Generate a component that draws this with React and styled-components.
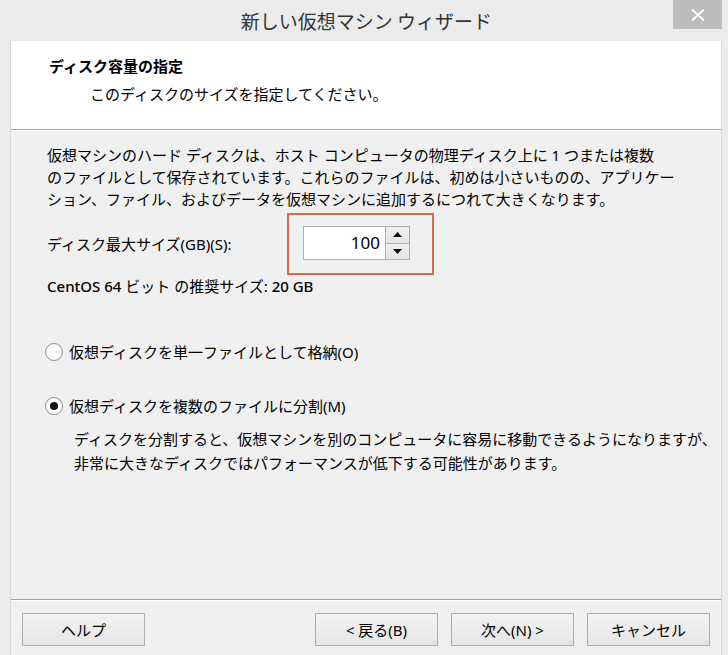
import React, { useState } from 'react';
import styled, { createGlobalStyle } from 'styled-components';

const Global = createGlobalStyle`
  html, body { margin: 0; padding: 0; background: #ebebeb; }
  body { font-family: "Noto Sans", "Noto Sans CJK JP", sans-serif; }
`;

const Window = styled.div`
  width: 728px;
  height: 655px;
  background: #ebebeb;
  display: flex;
  flex-direction: column;
  overflow: hidden;
`;

const TitleBar = styled.div`
  height: 41px;
  flex: none;
  display: grid;
  grid-template-columns: 1fr auto 1fr;
`;

const Title = styled.div`
  grid-column: 2;
  font-family: "Noto Sans CJK JP", sans-serif;
  font-size: 19px;
  line-height: 41px;
  color: #333;
  padding-left: 5px;
`;

const CloseButton = styled.div`
  grid-column: 3;
  justify-self: end;
  align-self: start;
  width: 49px;
  height: 29px;
  margin-right: 6px;
  background: #bcbcbc;
  color: #fff;
  display: flex;
  align-items: center;
  justify-content: center;
`;

const Client = styled.div`
  flex: 1;
  margin: 0 6px 0 10px;
  border-left: 1px solid #d8d8d8;
  border-right: 1px solid #d8d8d8;
  background: #f0f0f0;
  display: flex;
  flex-direction: column;
`;

const Header = styled.div`
  height: 89px;
  flex: none;
  background: #fff;
  border-bottom: 1px solid #a0a0a0;
  box-shadow: 0 1px 0 #fff;
  padding: 12px 0 0 38px;
  box-sizing: border-box;
`;

const HeaderTitle = styled.div`
  font-family: "Noto Sans CJK JP", sans-serif;
  font-weight: bold;
  font-size: 15px;
  line-height: 26px;
  color: #000;
`;

const HeaderSub = styled.div`
  font-family: "Noto Sans CJK JP", sans-serif;
  font-size: 15px;
  line-height: 26px;
  color: #000;
  padding-left: 41px;
  margin-top: 2px;
`;

const Body = styled.div`
  flex: 1;
  padding: 14px 0 0 36px;
  font-size: 15px;
  color: #000;
`;

const Paragraph = styled.p`
  margin: 0;
  line-height: 22px;
  white-space: nowrap;
`;

const SizeRow = styled.div`
  display: flex;
  align-items: center;
  margin-top: 3px;
`;

const SizeLabel = styled.div`
  width: 240px;
  line-height: 22px;
`;

const Highlight = styled.div`
  width: 147px;
  height: 62px;
  box-sizing: border-box;
  border: 2px solid #da6a4b;
  padding: 11px 0 0 14px;
`;

const Spinner = styled.div`
  display: flex;
  width: 107px;
  height: 34px;
  box-sizing: border-box;
  border: 1px solid #abadb3;
  background: #fff;
`;

const SpinValue = styled.div`
  flex: 1;
  text-align: right;
  padding-right: 5px;
  font-family: "Noto Sans", sans-serif;
  font-size: 17px;
  line-height: 31px;
`;

const SpinButtons = styled.div`
  width: 24px;
  display: flex;
  flex-direction: column;
`;

const SpinButton = styled.div`
  flex: 1;
  border: 1px solid #acacac;
  margin: -1px -1px ${p => (p.$up ? '0' : '-1px')} 0;
  background: linear-gradient(#f0f0f0, #e5e5e5);
  display: flex;
  align-items: center;
  justify-content: center;
`;

const Recommend = styled.div`
  line-height: 22px;
  .latin { font-weight: 500; }
`;

const RadioRow = styled.label`
  display: flex;
  align-items: center;
  gap: 6px;
  margin-left: -2px;
  margin-top: ${p => p.$top}px;
  line-height: 22px;
  cursor: default;
`;

const RadioCircle = styled.span`
  width: 18px;
  height: 18px;
  box-sizing: border-box;
  border-radius: 50%;
  border: 1px solid #8e8f8f;
  background: radial-gradient(circle, #fff 55%, #f3f3f3);
  display: flex;
  align-items: center;
  justify-content: center;
  &::after {
    content: '';
    width: 8px;
    height: 8px;
    border-radius: 50%;
    background: ${p => (p.$checked ? '#111' : 'transparent')};
  }
`;

const Note = styled.p`
  margin: 10px 0 0 27px;
  line-height: 24px;
`;

const Footer = styled.div`
  flex: none;
  height: 56px;
  border-top: 1px solid #a0a0a0;
  box-shadow: inset 0 1px 0 #fff;
  display: flex;
  align-items: flex-start;
  padding: 13px 0 0 11px;
  box-sizing: border-box;
`;

const Button = styled.button`
  width: 123px;
  height: 33px;
  border: 1px solid #adadad;
  background: linear-gradient(#f2f2f2, #e6e6e6);
  font-family: "Noto Sans", "Noto Sans CJK JP", sans-serif;
  font-size: 15px;
  color: #000;
  padding: 0;
  margin-left: ${p => p.$gap || 0}px;
`;

const Up = () => (
  <svg width="9" height="5" viewBox="0 0 9 5"><path d="M0 5 L4.5 0 L9 5 Z" fill="#000" /></svg>
);
const Down = () => (
  <svg width="9" height="5" viewBox="0 0 9 5"><path d="M0 0 L4.5 5 L9 0 Z" fill="#000" /></svg>
);

export default function App() {
  const [mode, setMode] = useState('split');
  return (
    <>
      <Global />
      <Window>
        <TitleBar>
          <Title>新しい仮想マシン ウィザード</Title>
          <CloseButton>
            <svg width="14" height="12" viewBox="0 0 14 12">
              <path d="M1 0.5 L13 11.5 M13 0.5 L1 11.5" stroke="#fff" strokeWidth="2" />
            </svg>
          </CloseButton>
        </TitleBar>
        <Client>
          <Header>
            <HeaderTitle>ディスク容量の指定</HeaderTitle>
            <HeaderSub>このディスクのサイズを指定してください。</HeaderSub>
          </Header>
          <Body>
            <Paragraph>
              仮想マシンのハード ディスクは、ホスト コンピュータの物理ディスク上に 1 つまたは複数<br />
              のファイルとして保存されています。これらのファイルは、初めは小さいものの、アプリケー<br />
              ション、ファイル、およびデータを仮想マシンに追加するにつれて大きくなります。
            </Paragraph>
            <SizeRow>
              <SizeLabel>ディスク最大サイズ(GB)(S):</SizeLabel>
              <Highlight>
                <Spinner>
                  <SpinValue>100</SpinValue>
                  <SpinButtons>
                    <SpinButton $up><Up /></SpinButton>
                    <SpinButton><Down /></SpinButton>
                  </SpinButtons>
                </Spinner>
              </Highlight>
            </SizeRow>
            <Recommend><span className="latin">CentOS 64</span> ビット の推奨サイズ: <span className="latin">20 GB</span></Recommend>
            <RadioRow $top={44} onClick={() => setMode('single')}>
              <RadioCircle $checked={mode === 'single'} />
              仮想ディスクを単一ファイルとして格納(O)
            </RadioRow>
            <RadioRow $top={32} onClick={() => setMode('split')}>
              <RadioCircle $checked={mode === 'split'} />
              仮想ディスクを複数のファイルに分割(M)
            </RadioRow>
            <Note>
              ディスクを分割すると、仮想マシンを別のコンピュータに容易に移動できるようになりますが、<br />
              非常に大きなディスクではパフォーマンスが低下する可能性があります。
            </Note>
          </Body>
          <Footer>
            <Button>ヘルプ</Button>
            <Button $gap={170}>&lt; 戻る(B)</Button>
            <Button $gap={13}>次へ(N) &gt;</Button>
            <Button $gap={13}>キャンセル</Button>
          </Footer>
        </Client>
      </Window>
    </>
  );
}
